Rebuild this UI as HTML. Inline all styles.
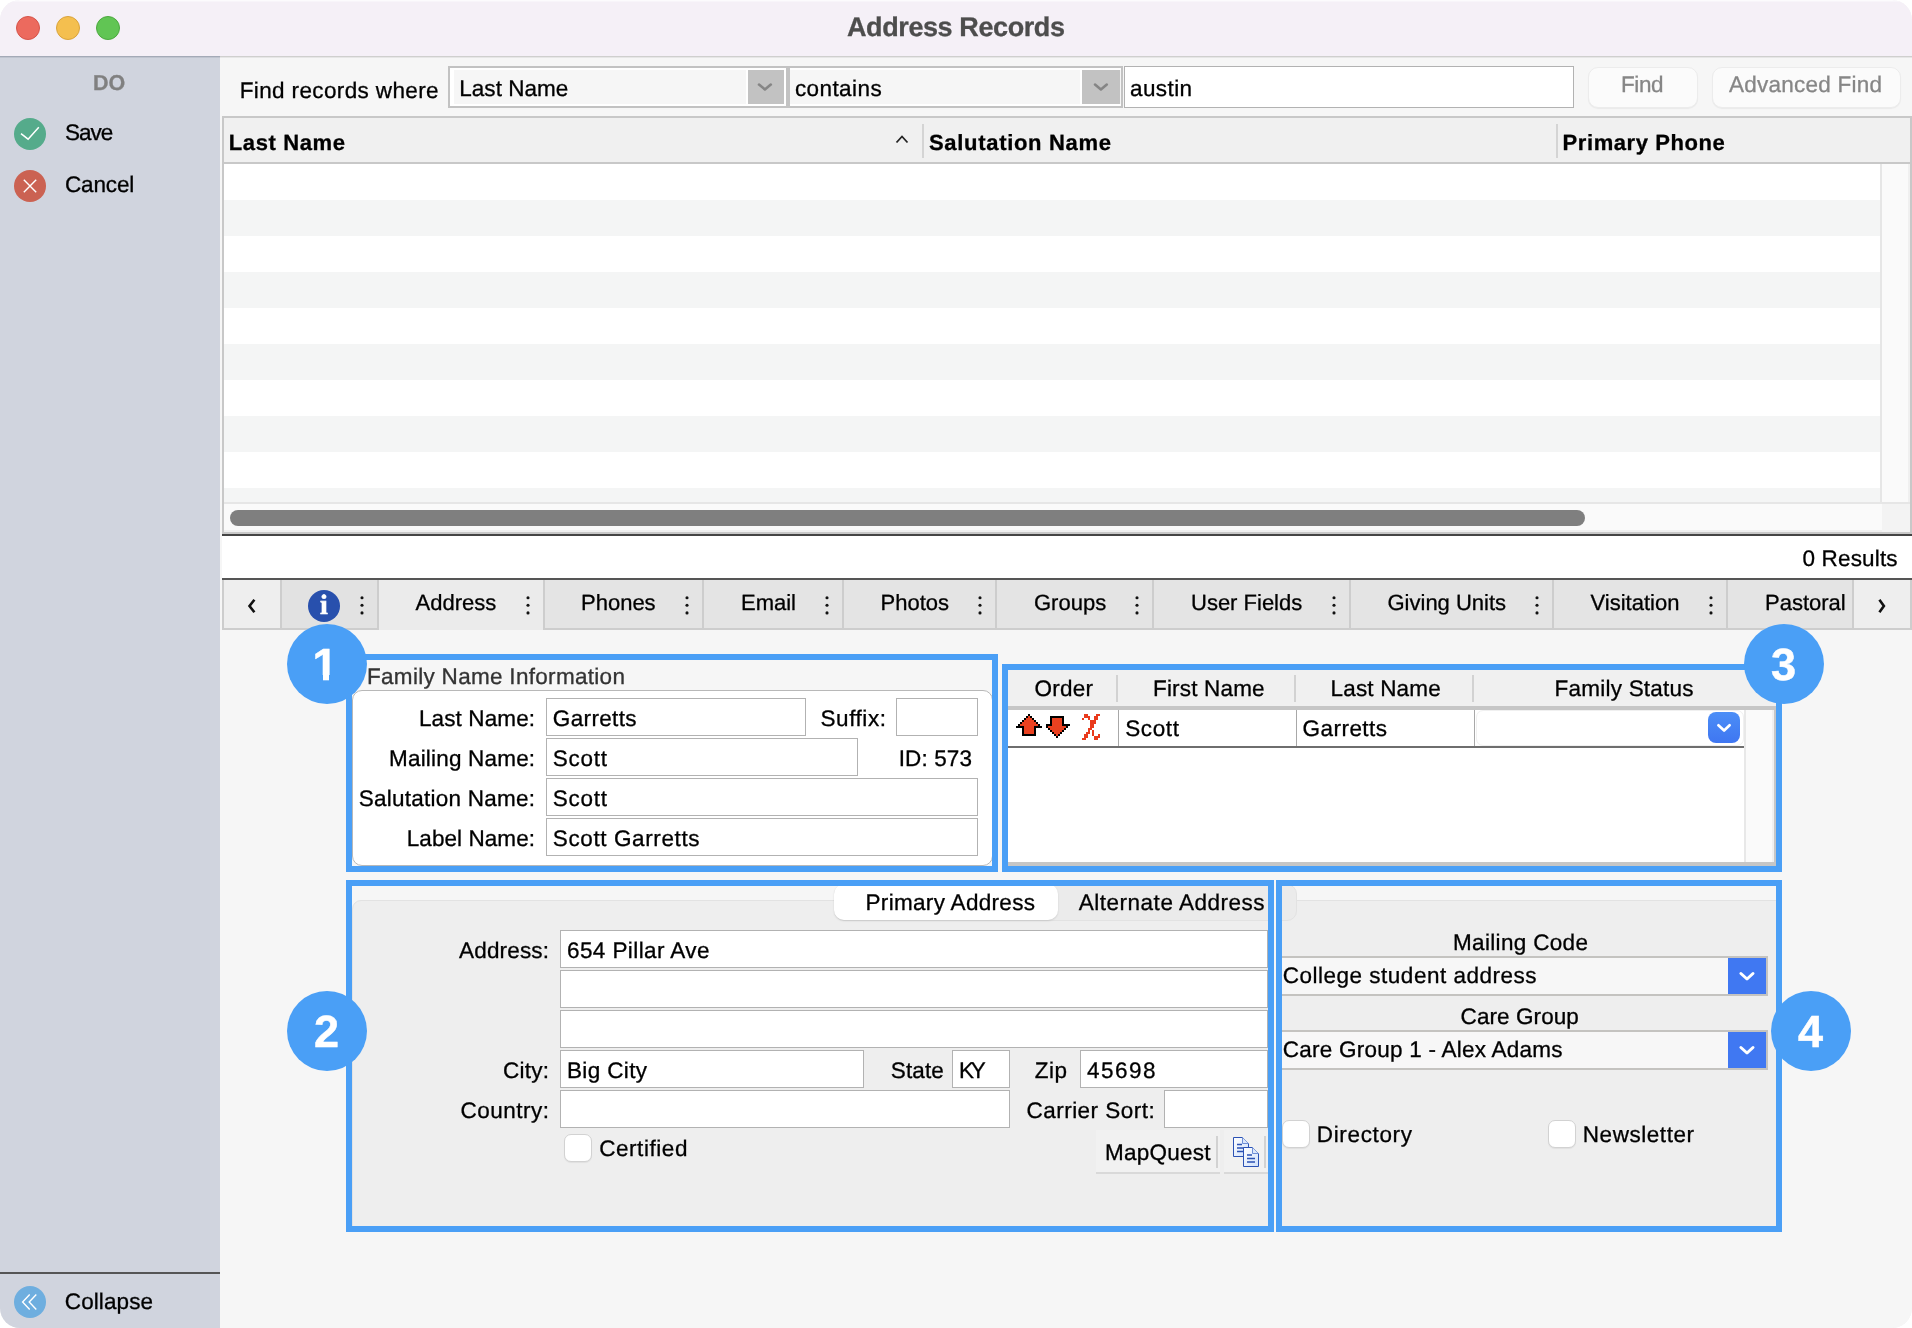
<!DOCTYPE html>
<html lang="en">
<head>
<meta charset="utf-8">
<title>Address Records</title>
<style>
*{box-sizing:border-box;margin:0;padding:0}
html,body{width:1912px;height:1328px;background:#fff;overflow:hidden}
body{font-family:"Liberation Sans",sans-serif;font-size:22.5px;color:#000;position:relative;text-rendering:geometricPrecision}
#win,#win *{position:absolute}
#win{left:0;top:0;width:1912px;height:1328px;border-radius:20px;overflow:hidden;background:#f6f6f6;will-change:transform}
.t{white-space:nowrap;line-height:30px;height:30px;-webkit-text-stroke-width:.3px}
.tl{width:24px;height:24px;border-radius:50%;top:16px}
.ic{width:32px;height:32px;border-radius:50%}
.combo{height:42px;border:2px solid #c2c2c2;background:#f6f6f6;box-shadow:inset 4px 0 0 #fff,inset -2px 0 0 #fff,inset 0 2px 0 #fff,inset 0 -2px 0 #fff}
.cbtn{background:#c2c2c2;top:2px;height:34px;box-shadow:-2px 0 0 #fff}
.btn{height:41px;top:66.5px;background:#fbfbfb;border:1px solid #ececec;border-radius:10px;box-shadow:0 1px 1px rgba(0,0,0,.05)}
.row{left:224px;width:1656px;height:36px;background:#f4f5f5}
.sep{width:2px;background:#d4d4d4}
.tab{top:580px;height:50px;background:#e4e4e4;border-right:2px solid #cdcdcd;border-bottom:2px solid #cdcdcd}
.bb{border:6px solid #4a9ff6}
.num{width:80px;height:80px;border-radius:50%;background:#4a9ff6;color:#fff;font-weight:bold;font-size:45px;line-height:82px;text-align:center;-webkit-text-stroke-width:.5px}
.inp{background:#fff;border:1px solid #b2b2b2;height:38px}
.chk{width:28px;height:28px;border-radius:7px;background:#fff;border:1px solid #d2d2d2;box-shadow:0 1px 1px rgba(0,0,0,.06)}
.bcombo{height:40px;background:#f7f7f7;border-top:2px solid #c4c3c0;border-bottom:2px solid #c4c3c0;border-right:2px solid #c4c3c0}
.bbtn{background:#4078f2;width:38px;height:36px;top:0}
</style>
</head>
<body>
<div id="win">

<div style="left:0px;top:0px;width:1912px;height:56px;background:#f5f0f7"></div>
<div style="left:0px;top:0px;width:1912px;height:1px;background:#fcfbfd"></div>
<div style="left:0px;top:1px;width:1912px;height:1px;background:#f8f5fa"></div>
<div style="left:0px;top:56px;width:1912px;height:1px;background:#cfcfce"></div>
<div style="left:0px;top:57px;width:1912px;height:1px;background:#e6e6e6"></div>
<div class="tl" style="left:16px;background:#ec6a5e;border:1px solid #d5544a"></div>
<div class="tl" style="left:56px;background:#f4bf4f;border:1px solid #d9a33c"></div>
<div class="tl" style="left:96px;background:#61c554;border:1px solid #4ca83f"></div>
<div class="t" style="left:847.0px;top:12.0px;letter-spacing:-0.40px;font-size:27px;font-weight:bold;color:#4d4d4d">Address Records</div>
<div style="left:0px;top:58px;width:220px;height:1270px;background:#d0d4de"></div>
<div style="left:0px;top:56px;width:220px;height:1px;background:#a4aab7"></div>
<div style="left:0px;top:57px;width:220px;height:1px;background:#bfc4cf"></div>
<div class="t" style="left:93.0px;top:67.6px;letter-spacing:-0.05px;font-size:21.5px;font-weight:bold;color:#808080">DO</div>
<div class="ic" style="left:14px;top:118px;background:#55ab8b"><svg style="left:4px;top:6px" width="24" height="20" viewBox="0 0 24 20"><path d="M3 9.7 L10.1 15.2 L20.8 3.3" fill="none" stroke="#fff" stroke-width="1.5"/></svg></div>
<div class="t" style="left:64.9px;top:118.0px;letter-spacing:-0.98px">Save</div>
<div class="ic" style="left:14px;top:170px;background:#cb6252"><svg style="left:8px;top:8px" width="16" height="16" viewBox="0 0 16 16"><path d="M1.8 1.8 L14.2 14.2 M14.2 1.8 L1.8 14.2" fill="none" stroke="#fff" stroke-width="1.4"/></svg></div>
<div class="t" style="left:64.9px;top:170.0px;letter-spacing:-0.12px">Cancel</div>
<div style="left:0px;top:1272px;width:220px;height:2px;background:#555"></div>
<div class="ic" style="left:14px;top:1286px;background:#6eaedf"><svg style="left:0;top:0" width="32" height="32" viewBox="0 0 32 32"><path d="M15.7 8.4 L8.6 15.9 L15.7 23.4 M22.3 8.4 L15.2 15.9 L22.3 23.4" fill="none" stroke="#fff" stroke-width="1.4"/></svg></div>
<div class="t" style="left:64.8px;top:1287.0px;letter-spacing:0.10px">Collapse</div>
<div class="t" style="left:239.7px;top:76.0px;letter-spacing:0.37px">Find records where</div>
<div class="combo" style="left:448px;top:66px;width:340px"></div>
<div class="cbtn" style="left:748px;top:70px;width:36px"><svg style="left:8px;top:10px" width="18" height="14" viewBox="0 0 18 14"><path d="M3 4.6 L8.9 9.4 L14.8 4.6" fill="none" stroke="#858585" stroke-width="2.6" stroke-linecap="round" stroke-linejoin="round"/></svg></div>
<div class="t" style="left:459.3px;top:74.0px;letter-spacing:0.02px">Last Name</div>
<div class="combo" style="left:787.6px;top:66px;width:335.4px;box-shadow:inset 0 2px 0 #fff,inset 0 -2px 0 #fff"></div>
<div class="cbtn" style="left:1082px;top:70px;width:38px"><svg style="left:10px;top:10px" width="18" height="14" viewBox="0 0 18 14"><path d="M3 4.6 L8.9 9.4 L14.8 4.6" fill="none" stroke="#858585" stroke-width="2.6" stroke-linecap="round" stroke-linejoin="round"/></svg></div>
<div class="t" style="left:794.9px;top:74.0px;letter-spacing:0.42px">contains</div>
<div class="inp" style="left:1124px;top:66px;width:450px;height:42px"></div>
<div class="t" style="left:1130.0px;top:74.0px;letter-spacing:0.40px">austin</div>
<div class="btn" style="left:1588px;width:110px"></div>
<div class="t" style="left:1621.0px;top:70.0px;letter-spacing:-0.38px;color:#868686">Find</div>
<div class="btn" style="left:1712px;width:189px"></div>
<div class="t" style="left:1729.0px;top:70.0px;letter-spacing:0.24px;color:#868686">Advanced Find</div>
<div style="left:222px;top:116px;width:1690px;height:418px;background:#fff;border:2px solid #c8c8c8"></div>
<div style="left:224px;top:118px;width:1686px;height:46px;background:#f0f0f0;border-bottom:2px solid #c8c8c8"></div>
<div class="t" style="left:228.8px;top:128.0px;letter-spacing:0.61px;font-size:22px;font-weight:bold">Last Name</div>
<svg style="left:894px;top:133px" width="16" height="12" viewBox="0 0 16 12"><path d="M2.5 9.5 L8 3.5 L13.5 9.5" fill="none" stroke="#222" stroke-width="1.8"/></svg>
<div class="sep" style="left:922px;top:124px;height:34px"></div>
<div class="t" style="left:929.0px;top:128.0px;letter-spacing:0.69px;font-size:22px;font-weight:bold">Salutation Name</div>
<div class="sep" style="left:1556px;top:124px;height:34px"></div>
<div class="t" style="left:1562.6px;top:128.0px;letter-spacing:0.57px;font-size:22px;font-weight:bold">Primary Phone</div>
<div class="row" style="top:200px"></div>
<div class="row" style="top:272px"></div>
<div class="row" style="top:344px"></div>
<div class="row" style="top:416px"></div>
<div class="row" style="top:488px;height:14px"></div>
<div style="left:1880px;top:164px;width:30px;height:338px;background:#fafafa;border-left:2px solid #e6e6e6;border-right:2px solid #f0f0f0"></div>
<div style="left:224px;top:502px;width:1686px;height:30px;background:#fafafa;border-top:2px solid #e6e6e6;border-bottom:2px solid #efefef"></div>
<div style="left:1882px;top:504px;width:28px;height:28px;background:#f3f3f3"></div>
<div style="left:230px;top:510px;width:1355px;height:16px;border-radius:8px;background:#7f7f7f"></div>
<div style="left:222px;top:534px;width:1690px;height:2px;background:#444"></div>
<div style="left:222px;top:536px;width:1690px;height:42px;background:#fff"></div>
<div class="t" style="left:1802.5px;top:544.0px;letter-spacing:0.16px">0 Results</div>
<div style="left:222px;top:578px;width:1690px;height:2px;background:#555"></div>
<div style="left:222px;top:580px;width:1690px;height:50px;background:#e4e4e4;border-bottom:2px solid #cdcdcd"></div>
<div class="tab" style="left:222px;width:60px;border-left:2px solid #cdcdcd;background:#eeeeee"></div>
<div class="tab" style="left:282px;width:97px;background:#e2e2e2"></div>
<div class="tab" style="left:379px;width:166px;background:#ebebeb;border-bottom:none"></div>
<div class="tab" style="left:545px;width:159px"></div>
<div class="tab" style="left:704px;width:140px"></div>
<div class="tab" style="left:844px;width:153px"></div>
<div class="tab" style="left:997px;width:157px"></div>
<div class="tab" style="left:1154px;width:197px"></div>
<div class="tab" style="left:1351px;width:203px"></div>
<div class="tab" style="left:1554px;width:174px"></div>
<div class="tab" style="left:1728px;width:126px"></div>
<div class="tab" style="left:1854px;width:58px;background:#eeeeee"></div>
<div class="t" style="left:415.6px;top:588.0px;letter-spacing:0.00px;font-size:22px">Address</div>
<div class="t" style="left:581.0px;top:588.0px;letter-spacing:0.00px;font-size:22px">Phones</div>
<div class="t" style="left:741.0px;top:588.0px;letter-spacing:0.00px;font-size:22px">Email</div>
<div class="t" style="left:880.5px;top:588.0px;letter-spacing:0.00px;font-size:22px">Photos</div>
<div class="t" style="left:1034.0px;top:588.0px;letter-spacing:0.00px;font-size:22px">Groups</div>
<div class="t" style="left:1191.0px;top:588.0px;letter-spacing:0.00px;font-size:22px">User Fields</div>
<div class="t" style="left:1387.5px;top:588.0px;letter-spacing:0.00px;font-size:22px">Giving Units</div>
<div class="t" style="left:1590.5px;top:588.0px;letter-spacing:0.00px;font-size:22px">Visitation</div>
<div class="t" style="left:1765.0px;top:588.0px;letter-spacing:0.00px;font-size:22px">Pastoral</div>
<svg style="left:245px;top:596px" width="14" height="20" viewBox="0 0 14 20"><path d="M9.4 3.7 L4.5 10 L9.4 16.3" fill="none" stroke="#111" stroke-width="2.6"/></svg>
<svg style="left:1875px;top:596px" width="14" height="20" viewBox="0 0 14 20"><path d="M4.4 3.7 L8.9 10 L4.4 16.3" fill="none" stroke="#111" stroke-width="2.6"/></svg>
<div style="left:308px;top:590px;width:32px;height:32px;border-radius:50%;background:#2850ad"></div>
<div class="t" style="left:308px;top:590px;width:32px;height:32px;line-height:31px;text-align:center;color:#fff;font-family:'Liberation Serif',serif;font-weight:bold;font-size:28px;-webkit-text-stroke-width:.6px">i</div>
<svg style="left:360px;top:596px" width="4" height="20" viewBox="0 0 4 20"><circle cx="2" cy="1.8" r="1.55" fill="#111"/><circle cx="2" cy="9.3" r="1.55" fill="#111"/><circle cx="2" cy="16.9" r="1.55" fill="#111"/></svg>
<svg style="left:526px;top:596px" width="4" height="20" viewBox="0 0 4 20"><circle cx="2" cy="1.8" r="1.55" fill="#111"/><circle cx="2" cy="9.3" r="1.55" fill="#111"/><circle cx="2" cy="16.9" r="1.55" fill="#111"/></svg>
<svg style="left:685px;top:596px" width="4" height="20" viewBox="0 0 4 20"><circle cx="2" cy="1.8" r="1.55" fill="#111"/><circle cx="2" cy="9.3" r="1.55" fill="#111"/><circle cx="2" cy="16.9" r="1.55" fill="#111"/></svg>
<svg style="left:825px;top:596px" width="4" height="20" viewBox="0 0 4 20"><circle cx="2" cy="1.8" r="1.55" fill="#111"/><circle cx="2" cy="9.3" r="1.55" fill="#111"/><circle cx="2" cy="16.9" r="1.55" fill="#111"/></svg>
<svg style="left:978px;top:596px" width="4" height="20" viewBox="0 0 4 20"><circle cx="2" cy="1.8" r="1.55" fill="#111"/><circle cx="2" cy="9.3" r="1.55" fill="#111"/><circle cx="2" cy="16.9" r="1.55" fill="#111"/></svg>
<svg style="left:1135px;top:596px" width="4" height="20" viewBox="0 0 4 20"><circle cx="2" cy="1.8" r="1.55" fill="#111"/><circle cx="2" cy="9.3" r="1.55" fill="#111"/><circle cx="2" cy="16.9" r="1.55" fill="#111"/></svg>
<svg style="left:1332px;top:596px" width="4" height="20" viewBox="0 0 4 20"><circle cx="2" cy="1.8" r="1.55" fill="#111"/><circle cx="2" cy="9.3" r="1.55" fill="#111"/><circle cx="2" cy="16.9" r="1.55" fill="#111"/></svg>
<svg style="left:1535px;top:596px" width="4" height="20" viewBox="0 0 4 20"><circle cx="2" cy="1.8" r="1.55" fill="#111"/><circle cx="2" cy="9.3" r="1.55" fill="#111"/><circle cx="2" cy="16.9" r="1.55" fill="#111"/></svg>
<svg style="left:1709px;top:596px" width="4" height="20" viewBox="0 0 4 20"><circle cx="2" cy="1.8" r="1.55" fill="#111"/><circle cx="2" cy="9.3" r="1.55" fill="#111"/><circle cx="2" cy="16.9" r="1.55" fill="#111"/></svg>
<div class="t" style="left:367.0px;top:662.0px;letter-spacing:0.30px;color:#333">Family Name Information</div>
<div style="left:352px;top:690px;width:641px;height:176px;background:#fff;border:1px solid #b8b8b8;border-radius:10px"></div>
<div class="t" style="left:419.0px;top:704.0px;letter-spacing:0.11px">Last Name:</div>
<div class="t" style="left:389.0px;top:744.0px;letter-spacing:0.19px">Mailing Name:</div>
<div class="t" style="left:358.8px;top:784.0px;letter-spacing:0.24px">Salutation Name:</div>
<div class="t" style="left:406.8px;top:824.0px;letter-spacing:0.06px">Label Name:</div>
<div class="inp" style="left:546px;top:698px;width:260px"></div>
<div class="inp" style="left:546px;top:738px;width:312px"></div>
<div class="inp" style="left:546px;top:778px;width:432px"></div>
<div class="inp" style="left:546px;top:818px;width:432px"></div>
<div class="inp" style="left:896px;top:698px;width:82px"></div>
<div class="t" style="left:552.8px;top:704.0px;letter-spacing:0.36px">Garretts</div>
<div class="t" style="left:552.8px;top:744.0px;letter-spacing:0.74px">Scott</div>
<div class="t" style="left:552.8px;top:784.0px;letter-spacing:0.74px">Scott</div>
<div class="t" style="left:552.8px;top:824.0px;letter-spacing:0.61px">Scott Garretts</div>
<div class="t" style="left:820.5px;top:704.0px;letter-spacing:0.56px">Suffix:</div>
<div class="t" style="left:898.7px;top:744.0px;letter-spacing:0.13px">ID: 573</div>
<div style="left:1008px;top:670px;width:768px;height:196px;background:#fff"></div>
<div style="left:1008px;top:670px;width:768px;height:36px;background:#f0f0f0"></div>
<div style="left:1008px;top:706px;width:768px;height:4px;background:#c6c6c6"></div>
<div style="left:1008px;top:862px;width:768px;height:4px;background:#c6c6c6"></div>
<div style="left:1744px;top:710px;width:30px;height:152px;background:#fafafa;border-left:2px solid #e8e8e8;border-right:2px solid #f0f0f0"></div>
<div style="left:1774px;top:706px;width:2px;height:160px;background:#c6c6c6"></div>
<div class="sep" style="left:1116px;top:675px;height:27px;background:#d2d2d2"></div>
<div class="sep" style="left:1294px;top:675px;height:27px;background:#d2d2d2"></div>
<div class="sep" style="left:1472px;top:675px;height:27px;background:#d2d2d2"></div>
<div class="t" style="left:1034.5px;top:674.0px;letter-spacing:0.25px">Order</div>
<div class="t" style="left:1153.0px;top:674.0px;letter-spacing:0.18px">First Name</div>
<div class="t" style="left:1330.5px;top:674.0px;letter-spacing:0.18px">Last Name</div>
<div class="t" style="left:1554.6px;top:674.0px;letter-spacing:0.22px">Family Status</div>
<div style="left:1008px;top:746px;width:736px;height:2px;background:#6e6e6e"></div>
<div style="left:1118px;top:710px;width:1px;height:36px;background:#a8a8a8"></div>
<div style="left:1296px;top:710px;width:1px;height:36px;background:#a8a8a8"></div>
<div style="left:1474px;top:710px;width:1px;height:36px;background:#a8a8a8"></div>
<div class="t" style="left:1125.2px;top:714.0px;letter-spacing:0.61px">Scott</div>
<div class="t" style="left:1302.6px;top:714.0px;letter-spacing:0.45px">Garretts</div>
<svg style="left:1016px;top:714px" width="56" height="24" viewBox="1016 714 56 24" shape-rendering="crispEdges"><g fill="#ea4120"><rect x="1028" y="716" width="2" height="2"/><rect x="1026" y="718" width="6" height="2"/><rect x="1052" y="718" width="10" height="2"/><rect x="1024" y="720" width="10" height="2"/><rect x="1052" y="720" width="10" height="2"/><rect x="1022" y="722" width="14" height="2"/><rect x="1052" y="722" width="10" height="2"/><rect x="1020" y="724" width="18" height="2"/><rect x="1052" y="724" width="10" height="2"/><rect x="1024" y="726" width="10" height="2"/><rect x="1048" y="726" width="18" height="2"/><rect x="1024" y="728" width="10" height="2"/><rect x="1050" y="728" width="14" height="2"/><rect x="1024" y="730" width="10" height="2"/><rect x="1052" y="730" width="10" height="2"/><rect x="1024" y="732" width="10" height="2"/><rect x="1054" y="732" width="6" height="2"/><rect x="1056" y="734" width="2" height="2"/></g><g fill="#000"><rect x="1028" y="714" width="2" height="2"/><rect x="1026" y="716" width="2" height="2"/><rect x="1030" y="716" width="2" height="2"/><rect x="1050" y="716" width="14" height="2"/><rect x="1024" y="718" width="2" height="2"/><rect x="1032" y="718" width="2" height="2"/><rect x="1050" y="718" width="2" height="2"/><rect x="1062" y="718" width="2" height="2"/><rect x="1022" y="720" width="2" height="2"/><rect x="1034" y="720" width="2" height="2"/><rect x="1050" y="720" width="2" height="2"/><rect x="1062" y="720" width="2" height="2"/><rect x="1020" y="722" width="2" height="2"/><rect x="1036" y="722" width="2" height="2"/><rect x="1050" y="722" width="2" height="2"/><rect x="1062" y="722" width="2" height="2"/><rect x="1018" y="724" width="2" height="2"/><rect x="1038" y="724" width="2" height="2"/><rect x="1046" y="724" width="6" height="2"/><rect x="1062" y="724" width="8" height="2"/><rect x="1016" y="726" width="8" height="2"/><rect x="1034" y="726" width="8" height="2"/><rect x="1046" y="726" width="2" height="2"/><rect x="1066" y="726" width="2" height="2"/><rect x="1022" y="728" width="2" height="2"/><rect x="1034" y="728" width="2" height="2"/><rect x="1048" y="728" width="2" height="2"/><rect x="1064" y="728" width="2" height="2"/><rect x="1022" y="730" width="2" height="2"/><rect x="1034" y="730" width="2" height="2"/><rect x="1050" y="730" width="2" height="2"/><rect x="1062" y="730" width="2" height="2"/><rect x="1022" y="732" width="2" height="2"/><rect x="1034" y="732" width="2" height="2"/><rect x="1052" y="732" width="2" height="2"/><rect x="1060" y="732" width="2" height="2"/><rect x="1022" y="734" width="14" height="2"/><rect x="1054" y="734" width="2" height="2"/><rect x="1058" y="734" width="2" height="2"/><rect x="1056" y="736" width="2" height="2"/></g></svg>
<svg style="left:1082px;top:714px" width="18" height="26" viewBox="1082 714 18 26" shape-rendering="crispEdges"><g fill="#e93a1c"><rect x="1084" y="714" width="4" height="2"/><rect x="1096" y="714" width="4" height="2"/><rect x="1084" y="716" width="6" height="2"/><rect x="1094" y="716" width="4" height="2"/><rect x="1082" y="718" width="2" height="2"/><rect x="1088" y="718" width="2" height="2"/><rect x="1094" y="718" width="4" height="2"/><rect x="1090" y="720" width="6" height="2"/><rect x="1090" y="722" width="6" height="2"/><rect x="1090" y="724" width="4" height="2"/><rect x="1090" y="726" width="4" height="2"/><rect x="1088" y="728" width="4" height="2"/><rect x="1088" y="730" width="2" height="2"/><rect x="1092" y="730" width="2" height="2"/><rect x="1086" y="732" width="4" height="2"/><rect x="1092" y="732" width="2" height="2"/><rect x="1084" y="734" width="4" height="2"/><rect x="1092" y="734" width="2" height="2"/><rect x="1098" y="734" width="2" height="2"/><rect x="1084" y="736" width="4" height="2"/><rect x="1094" y="736" width="6" height="2"/><rect x="1082" y="738" width="4" height="2"/><rect x="1094" y="738" width="4" height="2"/></g></svg>
<div style="left:1476px;top:710px;width:268px;height:36px;background:#fff;border-radius:7px;border:1px solid #f0f0f0"></div>
<div style="left:1708px;top:712px;width:32px;height:31px;border-radius:8px;background:linear-gradient(#4b8ef7,#3f76f1)"><svg style="left:8px;top:10px" width="16" height="12" viewBox="0 0 16 12"><path d="M2.4 3.3 L8.1 8.5 L13.6 3.3" fill="none" stroke="#fff" stroke-width="2.7" stroke-linecap="round" stroke-linejoin="round"/></svg></div>
<div style="left:352px;top:900px;width:1427px;height:340px;background:#eeeeee;border:1px solid #e2e2e2;border-radius:9px 2px 2px 9px"></div>
<div style="left:834px;top:884px;width:463px;height:37px;background:#ebebeb;border:1px solid #e2e2e2;border-radius:10px"></div>
<div style="left:834px;top:884px;width:224px;height:36px;background:#fff;border-radius:10px;box-shadow:0 1px 2px rgba(0,0,0,.12)"></div>
<div class="t" style="left:865.5px;top:888.0px;letter-spacing:0.32px">Primary Address</div>
<div class="t" style="left:1078.7px;top:888.0px;letter-spacing:0.52px">Alternate Address</div>
<div class="t" style="left:459.0px;top:936.0px;letter-spacing:0.18px">Address:</div>
<div class="t" style="left:503.0px;top:1056.0px;letter-spacing:0.25px">City:</div>
<div class="t" style="left:460.5px;top:1096.0px;letter-spacing:0.50px">Country:</div>
<div class="inp" style="left:560px;top:930px;width:708px"></div>
<div class="inp" style="left:560px;top:970px;width:708px"></div>
<div class="inp" style="left:560px;top:1010px;width:708px"></div>
<div class="inp" style="left:560px;top:1050px;width:304px"></div>
<div class="inp" style="left:560px;top:1090px;width:450px"></div>
<div class="inp" style="left:952px;top:1050px;width:58px"></div>
<div class="inp" style="left:1080px;top:1050px;width:188px"></div>
<div class="inp" style="left:1164px;top:1090px;width:104px"></div>
<div class="t" style="left:567.0px;top:936.0px;letter-spacing:0.41px">654 Pillar Ave</div>
<div class="t" style="left:567.0px;top:1056.0px;letter-spacing:0.36px">Big City</div>
<div class="t" style="left:890.8px;top:1056.0px;letter-spacing:0.12px">State</div>
<div class="t" style="left:959.0px;top:1056.0px;letter-spacing:-3.20px">KY</div>
<div class="t" style="left:1034.7px;top:1056.0px;letter-spacing:0.52px">Zip</div>
<div class="t" style="left:1087.0px;top:1056.0px;letter-spacing:1.47px">45698</div>
<div class="t" style="left:1026.5px;top:1096.0px;letter-spacing:0.47px">Carrier Sort:</div>
<div class="chk" style="left:564px;top:1134px"></div>
<div class="t" style="left:599.2px;top:1134.0px;letter-spacing:0.56px">Certified</div>
<div style="left:1096px;top:1130px;width:124px;height:44px;background:#f1f1f1;border-bottom:2px solid #d9d9d9"></div>
<div style="left:1216px;top:1136px;width:2px;height:32px;background:#d2d2d2"></div>
<div class="t" style="left:1105.0px;top:1138.0px;letter-spacing:0.26px">MapQuest</div>
<div style="left:1224px;top:1130px;width:48px;height:44px;background:#f1f1f1;border-bottom:2px solid #d9d9d9"></div>
<div style="left:1264px;top:1136px;width:2px;height:32px;background:#d2d2d2"></div>
<svg style="left:1232px;top:1136px" width="29" height="32" viewBox="0 0 29 32"><defs><linearGradient id="pg" x1="0" y1="0" x2="1" y2="1"><stop offset="0" stop-color="#ffffff"/><stop offset="1" stop-color="#cfe0fb"/></linearGradient></defs>
<path d="M1.5 1.5 H10.5 L16.5 7.5 V20.5 H1.5 Z" fill="url(#pg)" stroke="#2b52b4" stroke-width="1"/><path d="M10.5 1.5 V7.5 H16.5" fill="#dbe7fb" stroke="#6f8fd6" stroke-width="1"/>
<path d="M5 8.5 H10 M5 12 H12 M5 15.5 H12" stroke="#2b52b4" stroke-width="1.6"/>
<path d="M11.5 11.5 H20.5 L26.5 17.5 V30.5 H11.5 Z" fill="url(#pg)" stroke="#2b52b4" stroke-width="1"/><path d="M20.5 11.5 V17.5 H26.5" fill="#dbe7fb" stroke="#6f8fd6" stroke-width="1"/>
<path d="M15 19 H20 M15 22.5 H23 M15 26 H23" stroke="#2b52b4" stroke-width="1.6"/></svg>
<div class="t" style="left:1453.0px;top:928.0px;letter-spacing:0.33px">Mailing Code</div>
<div class="bcombo" style="left:1270px;top:956px;width:498px"><div class="bbtn" style="left:458px"><svg style="left:10px;top:12px" width="18" height="13" viewBox="0 0 18 13"><path d="M2.9 3.5 L9 9 L15 3.5" fill="none" stroke="#fff" stroke-width="3" stroke-linecap="round" stroke-linejoin="round"/></svg></div></div>
<div class="t" style="left:1282.8px;top:961.0px;letter-spacing:0.50px">College student address</div>
<div class="t" style="left:1460.6px;top:1002.0px;letter-spacing:0.08px">Care Group</div>
<div class="bcombo" style="left:1270px;top:1030px;width:498px"><div class="bbtn" style="left:458px"><svg style="left:10px;top:12px" width="18" height="13" viewBox="0 0 18 13"><path d="M2.9 3.5 L9 9 L15 3.5" fill="none" stroke="#fff" stroke-width="3" stroke-linecap="round" stroke-linejoin="round"/></svg></div></div>
<div class="t" style="left:1282.8px;top:1035.0px;letter-spacing:0.24px">Care Group 1 - Alex Adams</div>
<div class="chk" style="left:1282px;top:1120px"></div>
<div class="t" style="left:1316.8px;top:1120.0px;letter-spacing:0.65px">Directory</div>
<div class="chk" style="left:1548px;top:1120px"></div>
<div class="t" style="left:1582.8px;top:1120.0px;letter-spacing:0.55px">Newsletter</div>
<div style="left:222px;top:1232px;width:1690px;height:96px;background:#f6f6f6"></div>
<div style="left:1274px;top:872px;width:2px;height:400px;background:#f6f6f6"></div>
<div class="bb" style="left:346px;top:654px;width:652px;height:218px"></div>
<div class="bb" style="left:1002px;top:664px;width:780px;height:208px"></div>
<div class="bb" style="left:346px;top:880px;width:928px;height:352px"></div>
<div class="bb" style="left:1276px;top:880px;width:506px;height:352px"></div>
<div class="num" style="left:286.5px;top:624px;text-indent:-3px">1</div>
<div style="left:314px;top:675px;width:9px;height:6px;background:#4a9ff6"></div>
<div style="left:329px;top:675px;width:9px;height:6px;background:#4a9ff6"></div>
<div class="num" style="left:1743.5px;top:624px">3</div>
<div class="num" style="left:286.5px;top:990.7px">2</div>
<div class="num" style="left:1770.5px;top:990.7px">4</div>
</div>
</body>
</html>
